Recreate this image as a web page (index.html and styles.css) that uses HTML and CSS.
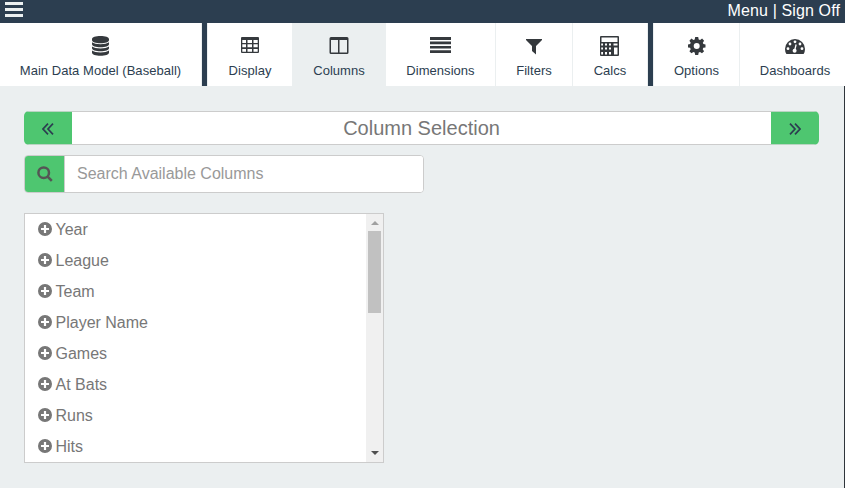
FILE: index.html
```html
<!DOCTYPE html>
<html lang="en">
<head>
    <meta charset="UTF-8">
    <meta name="viewport" content="width=device-width, initial-scale=1.0">
    <title>Column Selection</title>
    <link rel="stylesheet" href="styles.css">
</head>
<body>

<!-- Shared plus icon for the column list -->
<svg class="sprite">
    <symbol id="plus" viewBox="0 0 14 14">
        <path fill-rule="evenodd" d="M7 0a7 7 0 1 0 0 14A7 7 0 0 0 7 0zM5.900 3h2.200v2.900H11v2.200H8.100V11H5.900V8.100H3V5.900h2.900z"/>
    </symbol>
</svg>

<header class="topbar">
    <svg class="menu-icon" width="18" height="16" viewBox="0 0 18 16"><path d="M0 0h18v3H0zM0 6h18v3H0zM0 12h18v3H0z"/></svg>
    <div class="user-links"><a href="#">Menu</a> | <a href="#">Sign Off</a></div>
</header>

<nav class="tabs">
    <a class="tab tab-model" href="#">
        <svg width="22" height="22" viewBox="0 0 22 22"><path d="M10.500 1c4.800 0 8.500 1.300 8.500 3v1.200c0 1.700-3.700 3-8.500 3S2 6.900 2 5.200V4c0-1.700 3.700-3 8.500-3zM2 7.300c1.600 1.300 4.900 2 8.500 2s6.900-.7 8.500-2v1.900c0 1.700-3.700 3-8.500 3s-8.500-1.300-8.500-3zM2 11.400c1.600 1.300 4.900 2 8.500 2s6.900-.7 8.500-2v1.800c0 1.700-3.700 3-8.500 3s-8.500-1.300-8.500-3zM2 15.500c1.600 1.300 4.900 2 8.500 2s6.900-.7 8.500-2v2.200c0 1.700-3.700 3-8.500 3s-8.500-1.300-8.500-3z"/></svg>
        <span>Main Data Model (Baseball)</span>
    </a>
    <a class="tab tab-display" href="#">
        <svg width="22" height="22" viewBox="0 0 22 22"><path fill-rule="evenodd" d="M3 2h16q1 0 1 1v14q0 1-1 1H3q-1 0-1-1V3q0-1 1-1zM3.300 5v3H7V5zM8.500 5v3H13V5zM14.500 5v3h4.200V5zM3.300 9.300v3H7v-3zM8.500 9.300v3H13v-3zM14.500 9.300v3h4.200v-3zM3.300 14v2.800H7V14zM8.500 14v2.800H13V14zM14.500 14v2.800h4.200V14z"/></svg>
        <span>Display</span>
    </a>
    <a class="tab tab-columns active" href="#">
        <svg width="22" height="22" viewBox="0 0 22 22"><path fill-rule="evenodd" d="M3 2h16q1.500 0 1.500 1.500v14q0 1.500-1.500 1.500H3q-1.500 0-1.500-1.500v-14Q1.500 2 3 2zM3 5v12.500h7V5zM11.500 5v12.500H19V5z"/></svg>
        <span>Columns</span>
    </a>
    <a class="tab tab-dimensions" href="#">
        <svg width="21" height="22" viewBox="0 0 21 22"><path d="M0 2h21v3H0zM0 6.500h21v2.700H0zM0 11h21v2.500H0zM0 15.200h21v2.800H0z"/></svg>
        <span>Dimensions</span>
    </a>
    <a class="tab tab-filters" href="#">
        <svg width="22" height="22" viewBox="0 0 22 22"><path d="M3 4h16v1l-6 6v8.500L9 16v-5L3 5z"/></svg>
        <span>Filters</span>
    </a>
    <a class="tab tab-calcs" href="#">
        <svg width="22" height="22" viewBox="0 0 22 22"><path fill-rule="evenodd" d="M2 1h17q1 0 1 1v18q0 1-1 1H2q-1 0-1-1V2q0-1 1-1zM2.500 2.500V7h16V2.500zM2.200 8.500v2H4v-2zM6 8.500v2h2v-2zM10 8.500v2h2v-2zM14.500 8.500v2h4v-2zM2.200 12.500v2H4v-2zM6 12.500v2h2v-2zM10 12.500v2h2v-2zM15 12.500v7h3.500v-7zM2.200 17v2.500H4V17zM6 17v2.500h2V17zM10 17v2.500h2V17z"/></svg>
        <span>Calcs</span>
    </a>
    <a class="tab tab-options" href="#">
        <svg width="21" height="22" viewBox="0 0 21 22"><path fill-rule="evenodd" d="M9.200 2h3l.5 2.400 1.400.6 2-1.400 2 2.100-1.300 2 .6 1.300 2.100.4v3l-2.200.4-.6 1.400 1.400 2-2.100 2-2-1.300-1.300.6-.5 2.500h-3l-.5-2.500-1.300-.6-2 1.300-2-2 1.300-2-.6-1.400L2 12.400v-3l2.100-.4.6-1.300-1.300-2 2-2.100 2 1.400L8.700 4.400zM10.700 7.900a3 3 0 1 0 0 6 3 3 0 0 0 0-6z"/></svg>
        <span>Options</span>
    </a>
    <a class="tab tab-dashboards" href="#">
        <svg width="22" height="22" viewBox="0 0 22 22">
            <path d="M11 4a10 10 0 0 1 10 10q0 2.700-1.400 5H2.400Q1 16.700 1 14A10 10 0 0 1 11 4z"/>
            <g fill="#fff"><circle cx="4" cy="13.700" r="1.400"/><circle cx="6" cy="9" r="1.400"/><circle cx="11" cy="6.800" r="1.400"/><circle cx="16" cy="9" r="1.400"/><circle cx="18" cy="13.700" r="1.400"/><circle cx="10.600" cy="15.700" r="2"/></g>
            <path d="M10.800 15l1.300-5.500" fill="none" stroke="#fff" stroke-width="1.300"/>
        </svg>
        <span>Dashboards</span>
    </a>
</nav>

<main class="content">
    <div class="step-bar">
        <button class="step prev"><svg width="12" height="12" viewBox="0 0 12 12"><path d="M6 .7L1 6l5 5.300M11 .7L6 6l5 5.300"/></svg></button>
        <div class="step-title">Column Selection</div>
        <button class="step next"><svg width="12" height="12" viewBox="0 0 12 12"><path d="M1 .7L6 6l-5 5.300M6 .7L11 6l-5 5.300"/></svg></button>
    </div>

    <div class="search">
        <span class="search-icon"><svg width="16" height="16" viewBox="0 0 16 16"><circle cx="6.700" cy="6.700" r="5.300"/><path d="M10.500 10.500l4.300 4.300"/></svg></span>
        <input type="text" placeholder="Search Available Columns">
    </div>

    <div class="column-box">
        <ul class="column-list">
            <li><svg><use href="#plus"/></svg>Year</li>
            <li><svg><use href="#plus"/></svg>League</li>
            <li><svg><use href="#plus"/></svg>Team</li>
            <li><svg><use href="#plus"/></svg>Player Name</li>
            <li><svg><use href="#plus"/></svg>Games</li>
            <li><svg><use href="#plus"/></svg>At Bats</li>
            <li><svg><use href="#plus"/></svg>Runs</li>
            <li><svg><use href="#plus"/></svg>Hits</li>
        </ul>
        <div class="scrollbar">
            <span class="arrow-up"></span>
            <span class="thumb"></span>
            <span class="arrow-down"></span>
        </div>
    </div>
</main>

</body>
</html>
```
FILE: styles.css
```css
* {
    box-sizing: border-box;
}
body {
    font-family: "Liberation Sans", Arial, sans-serif;
    font-size: 16px;
    color: #777;
    background: #ebeff0;
    margin: 0;
    height: 488px;
    display: flex;
    flex-direction: column;
    overflow: hidden;
}
.sprite {
    display: none;
}
.topbar {
    height: 23px;
    flex: none;
    background: #2c3e50;
    color: #fff;
    display: flex;
    justify-content: space-between;
    padding: 0 5px;
}
.topbar a {
    color: #fff;
    text-decoration: none;
}
.menu-icon {
    margin-top: 2px;
    fill: #ecf0f1;
}
.user-links {
    line-height: 21px;
    letter-spacing: 0.12px;
}

/* Tabs */
.tabs {
    display: flex;
    flex: none;
    height: 63px;
    overflow: hidden;
    background: #2c3e50;
}
.tab {
    display: flex;
    flex-direction: column;
    align-items: center;
    flex: none;
    padding-top: 12px;
    background: #fff;
    border-right: 1px solid #ebeff0;
    color: #2c3e50;
    font-size: 13px;
    line-height: 15px;
    letter-spacing: 0.04px;
    text-decoration: none;
    white-space: nowrap;
}
.tab svg {
    fill: #35393d;
    margin-bottom: 6px;
    flex: none;
}
.tab.active {
    background: #ebeff0;
}
.tab-model {
    width: 202px;
    margin-right: 5px;
}
.tab-display {
    width: 85px;
    border-right: none;
    border-left: 1px solid #ebeff0;
}
.tab-columns {
    width: 94px;
    border-right: none;
}
.tab-dimensions {
    width: 110px;
}
.tab-filters {
    width: 77px;
}
.tab-calcs {
    width: 75px;
    margin-right: 5px;
}
.tab-options {
    width: 87px;
    border-left: 1px solid #ebeff0;
}
.tab-dashboards {
    width: 110px;
    border-right: none;
}

.content {
    flex: 1;
    padding: 25px 25px 0 24px;
    border-right: 1px solid #2f353b;
}

/* Previous / next bar */
.step-bar {
    display: flex;
    height: 34px;
    border-radius: 5px;
    overflow: hidden;
}
.step {
    width: 48px;
    padding: 1px 0 0;
    display: flex;
    align-items: center;
    justify-content: center;
    border: solid #b9d4c2;
    border-width: 1px 0;
    background: #4ec670;
}
.step svg {
    fill: none;
    stroke: #2c3e50;
    stroke-width: 1.7;
}
.step-title {
    flex: 1;
    border: solid #ccc;
    border-width: 1px 0;
    background: #fff;
    font-size: 20px;
    line-height: 32px;
    text-align: center;
}

.search {
    display: flex;
    width: 400px;
    height: 38px;
    margin-top: 10px;
    border: 1px solid #ccc;
    border-radius: 4px;
    overflow: hidden;
    background: #fff;
}
.search-icon {
    width: 40px;
    display: flex;
    align-items: center;
    justify-content: center;
    border-right: 1px solid #ccc;
    background: #4ec670;
}
.search-icon svg {
    fill: none;
    stroke: #555;
    stroke-width: 2.5;
}
.search input {
    flex: 1;
    border: none;
    padding: 0 12px 1px;
    font: inherit;
    color: #555;
}
.search input::placeholder {
    color: #999;
}

/* Available columns */
.column-box {
    display: flex;
    width: 360px;
    height: 250px;
    margin-top: 20px;
    border: 1px solid #ccc;
    background: #fff;
    overflow: hidden;
}
.column-list {
    flex: 1;
    list-style: none;
    margin: 0;
    padding: 0 0 0 13px;
}
.column-list li {
    display: flex;
    align-items: center;
    height: 31px;
}
.column-list svg {
    width: 14px;
    height: 14px;
    margin: 0 3.5px 1px 0;
    fill: #777;
}
.scrollbar {
    width: 17px;
    display: flex;
    flex-direction: column;
    align-items: center;
    background: #f0f0f0;
}
.arrow-up, .arrow-down {
    width: 0;
    height: 0;
    border: 4px solid transparent;
}
.arrow-up {
    margin-top: 7px;
    border-top: none;
    border-bottom-color: #a0a0a0;
}
.thumb {
    width: 13px;
    height: 82px;
    margin-top: 6px;
    background: #c1c1c1;
}
.arrow-down {
    margin-top: auto;
    margin-bottom: 7px;
    border-bottom: none;
    border-top-color: #505050;
}
```
